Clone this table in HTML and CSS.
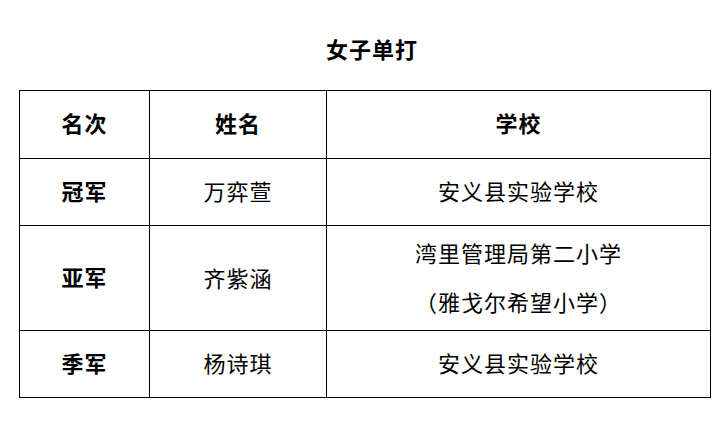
FILE: index.html
```html
<!DOCTYPE html>
<html lang="zh">
<head>
<meta charset="utf-8">
<title>女子单打</title>
<link rel="stylesheet" href="styles.css">
</head>
<body>
<h1 class="title">女子单打</h1>
<table class="results">
  <colgroup>
    <col class="c-rank">
    <col class="c-name">
    <col class="c-school">
  </colgroup>
  <thead>
    <tr class="row-head">
      <th>名次</th>
      <th>姓名</th>
      <th>学校</th>
    </tr>
  </thead>
  <tbody>
    <tr class="row-single">
      <th>冠军</th>
      <td>万弈萱</td>
      <td>安义县实验学校</td>
    </tr>
    <tr class="row-double">
      <th>亚军</th>
      <td>齐紫涵</td>
      <td>湾里管理局第二小学<br>（雅戈尔希望小学）</td>
    </tr>
    <tr class="row-single">
      <th>季军</th>
      <td>杨诗琪</td>
      <td>安义县实验学校</td>
    </tr>
  </tbody>
</table>
</body>
</html>
```
FILE: styles.css
```css
html, body {
  margin: 0;
  padding: 0;
  background: #fff;
}
body {
  width: 728px;
  height: 425px;
  overflow: hidden;
  font-family: "Noto Sans CJK SC", "Noto Sans CJK JP", sans-serif;
  color: #000;
}
.title {
  margin: 0;
  padding: 33px 0 0 16px;
  height: 30px;
  line-height: 30px;
  font-size: 22px;
  font-weight: 700;
  text-align: center;
  letter-spacing: 1px;
}
.results {
  margin: 27px 0 0 19px;
  border-collapse: collapse;
  table-layout: fixed;
  width: 691px;
}
.c-rank { width: 130px; }
.c-name { width: 177px; }
.c-school { width: 384px; }
.results th,
.results td {
  border: 1px solid #000;
  padding: 0 0 4px 0;
  text-align: center;
  vertical-align: middle;
  font-size: 22px;
  line-height: 49px;
  letter-spacing: 1px;
}
.results th { font-weight: 700; }
.results td { font-weight: 400; }
.row-head th { height: 63px; }
.row-single th, .row-single td { height: 62px; }
.row-double th, .row-double td { height: 100px; }
.row-double td { padding-bottom: 2px; }
```
